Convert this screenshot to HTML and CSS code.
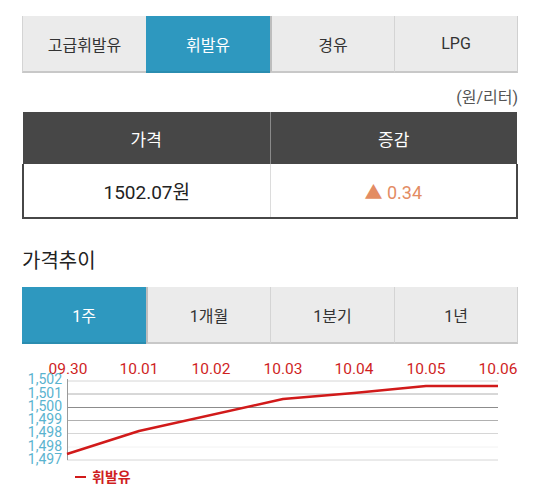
FILE: index.html
```html
<!DOCTYPE html>
<html lang="ko">
<head>
    <meta charset="UTF-8">
    <meta name="viewport" content="width=device-width, initial-scale=1.0">
    <title>유가 정보</title>
    <link rel="stylesheet" href="styles.css">
</head>
<body>
    <div class="wrap">
        <div class="tabs">
            <div class="tab">고급휘발유</div>
            <div class="tab active">휘발유</div>
            <div class="tab">경유</div>
            <div class="tab">LPG</div>
        </div>

        <div class="unit">(원/리터)</div>

        <table class="price">
            <tr>
                <th>가격</th>
                <th>증감</th>
            </tr>
            <tr>
                <td>1502.07원</td>
                <td class="up">&#9650; 0.34</td>
            </tr>
        </table>

        <h2 class="title">가격추이</h2>

        <div class="tabs">
            <div class="tab active">1주</div>
            <div class="tab">1개월</div>
            <div class="tab">1분기</div>
            <div class="tab">1년</div>
        </div>

        <svg class="chart" width="496" height="140" viewBox="22 355 496 140">
            <g class="xlabels">
                <text x="68" y="373">09.30</text>
                <text x="139" y="373">10.01</text>
                <text x="211" y="373">10.02</text>
                <text x="283" y="373">10.03</text>
                <text x="354" y="373">10.04</text>
                <text x="426" y="373">10.05</text>
                <text x="498" y="373">10.06</text>
            </g>
            <g class="grid">
                <line x1="67" y1="380" x2="498" y2="380"/>
                <line x1="67" y1="393" x2="498" y2="393" class="dark"/>
                <line x1="67" y1="406.5" x2="498" y2="406.5" class="darker"/>
                <line x1="67" y1="419.5" x2="498" y2="419.5" class="dark"/>
                <line x1="67" y1="432.5" x2="498" y2="432.5"/>
                <line x1="67" y1="446" x2="498" y2="446" class="faint"/>
                <line x1="67" y1="459" x2="498" y2="459"/>
                <line x1="67.5" y1="378" x2="67.5" y2="459" class="axis"/>
            </g>
            <g class="ylabels">
                <text x="62" y="383">1,502</text>
                <text x="62" y="397">1,501</text>
                <text x="62" y="410">1,500</text>
                <text x="62" y="423">1,499</text>
                <text x="62" y="436">1,498</text>
                <text x="62" y="450">1,498</text>
                <text x="62" y="463">1,497</text>
            </g>
            <polyline class="line" points="67,453 139,430 283,398 354,392 426,385 498,385"/>
            <g class="legend">
                <line x1="75" y1="476" x2="86" y2="476"/>
                <text x="92" y="481">휘발유</text>
            </g>
        </svg>
    </div>
</body>
</html>
```

FILE: styles.css
```css
body{
    margin: 0;
    background: #fff;
    font-family: Roboto, "Noto Sans CJK KR", sans-serif;
    color: #333;
}
.wrap{
    width: 496px;
    padding: 16px 0 0 22px;
}
.tabs{
    display: grid;
    grid-template-columns: repeat(4, 1fr);
    height: 57px;
}
.tab{
    display: flex;
    align-items: center;
    justify-content: center;
    background: #ebebeb;
    border-left: 1px solid #d4d4d4;
    border-bottom: 2px solid #c8c8c8;
    font-size: 16px;
    color: #333;
}
.tab:last-child{
    border-right: 1px solid #d0d0d0;
}
.tab.active{
    background: #2e98bf;
    color: #fff;
    border-left: none;
    border-bottom-color: #2a8db0;
}
.tab.active + .tab{
    border-left: 2px solid #bdbdbd;
}
.unit{
    text-align: right;
    font-size: 16px;
    color: #555;
    margin-top: 15px;
    line-height: 20px;
}
.price{
    width: 100%;
    border-collapse: collapse;
    margin-top: 4px;
    table-layout: fixed;
}
.price th{
    background: #474747;
    color: #fff;
    font-weight: normal;
    font-size: 17px;
    height: 52px;
    padding: 0;
}
.price th + th{
    border-left: 1px solid #8a8a8a;
}
.price td{
    height: 53px;
    padding: 0;
    text-align: center;
    font-size: 19px;
    color: #222;
    border-bottom: 2px solid #474747;
}
.price td:first-child{
    border-left: 2px solid #474747;
}
.price td:last-child{
    border-right: 2px solid #474747;
    border-left: 1px solid #dcdcdc;
}
.price td.up{
    color: #e38c63;
    font-size: 18px;
}
.title{
    margin: 30px 0 0;
    font-size: 20px;
    font-weight: normal;
    color: #222;
    line-height: 24px;
}
.title + .tabs{
    margin-top: 14px;
}
.chart{
    display: block;
    margin-top: 12px;
}
.xlabels text{
    fill: #cf1f1f;
    font-size: 15.5px;
    text-anchor: middle;
}
.ylabels text{
    fill: #5ab3cf;
    font-size: 14px;
    text-anchor: end;
}
.grid line{
    stroke: #d6d6d6;
    stroke-width: 1;
}
.grid line.dark{
    stroke: #b0b0b0;
}
.grid line.darker{
    stroke: #8c8c8c;
}
.grid line.faint{
    stroke: #f2f2f2;
}
.grid line.axis{
    stroke: #9a9a9a;
}
.line{
    fill: none;
    stroke: #d11a1a;
    stroke-width: 2.5;
    stroke-linejoin: round;
}
.legend line{
    stroke: #d11a1a;
    stroke-width: 2;
}
.legend text{
    fill: #cf1f1f;
    font-size: 14px;
    font-weight: bold;
}
```
